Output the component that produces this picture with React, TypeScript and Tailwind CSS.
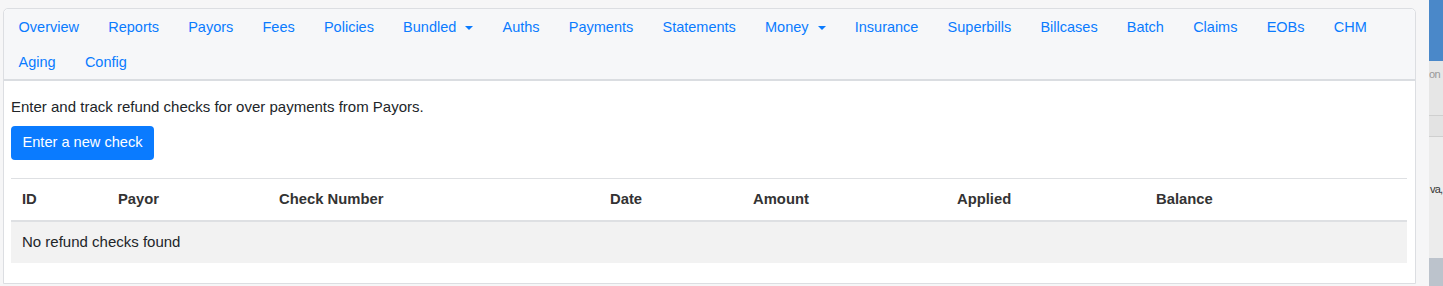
const navRow1 = [
  { label: "Overview" },
  { label: "Reports" },
  { label: "Payors" },
  { label: "Fees" },
  { label: "Policies" },
  { label: "Bundled", dropdown: true },
  { label: "Auths" },
  { label: "Payments" },
  { label: "Statements" },
  { label: "Money", dropdown: true },
  { label: "Insurance" },
  { label: "Superbills" },
  { label: "Billcases" },
  { label: "Batch" },
  { label: "Claims" },
  { label: "EOBs" },
  { label: "CHM" },
];

const navRow2 = [{ label: "Aging" }, { label: "Config" }];

const columns = [
  { label: "ID", w: "w-[96px]" },
  { label: "Payor", w: "w-[161px]" },
  { label: "Check Number", w: "w-[331px]" },
  { label: "Date", w: "w-[143px]" },
  { label: "Amount", w: "w-[204px]" },
  { label: "Applied", w: "w-[199px]" },
  { label: "Balance", w: "flex-1" },
];

function NavItem({ label, dropdown }: { label: string; dropdown?: boolean }) {
  return (
    <a className="flex items-center h-[35px] pt-[3px] px-[14.6px] text-[14.5px] text-[#0a7bff] cursor-pointer">
      {label}
      {dropdown && (
        <span className="ml-[9px] w-0 h-0 border-l-[4px] border-r-[4px] border-t-[4px] border-l-transparent border-r-transparent border-t-[#0a7bff]" />
      )}
    </a>
  );
}

export default function App() {
  return (
    <div className="flex w-[1443px] h-[286px] overflow-hidden bg-[#f6f6f7] font-['Liberation_Sans',Arial,sans-serif]">
      <div className="w-[1429px] pl-[3px] pt-[8px]">
        <div className="w-[1413px] border border-[#dcdee2] rounded-t-[5px] bg-white">
          <div className="bg-[#f6f7f9] rounded-t-[5px] border-b-2 border-[#dadde1]">
            <div className="flex">
              {navRow1.map((n) => (
                <NavItem key={n.label} {...n} />
              ))}
            </div>
            <div className="flex">
              {navRow2.map((n) => (
                <NavItem key={n.label} {...n} />
              ))}
            </div>
          </div>
          <div className="pl-[7px] pr-[8px] pt-[15px] pb-[20px] text-[15px] text-[#212529]">
            <p className="leading-[22px]">Enter and track refund checks for over payments from Payors.</p>
            <button className="mt-[8px] h-[34px] px-[11.5px] rounded-[4px] bg-[#0a7bff] text-white text-[14.6px]">
              Enter a new check
            </button>
            <div className="mt-[18px] border-t border-[#dee0e3]">
              <div className="flex h-[43px] items-center border-b-2 border-[#dee0e3] font-bold text-[#333] text-[14.8px]">
                {columns.map((c) => (
                  <div key={c.label} className={`${c.w} pl-[11px]`}>
                    {c.label}
                  </div>
                ))}
              </div>
              <div className="flex h-[41px] items-center bg-[#f2f2f2] pl-[11px]">No refund checks found</div>
            </div>
          </div>
        </div>
      </div>
      <div className="w-[14px] flex flex-col bg-[#e6e6e6] text-[11px] overflow-hidden">
        <div className="h-[61px] bg-[#4a88c9]" />
        <div className="h-[54px] pt-[5px] text-[#999] tracking-[-0.5px] whitespace-nowrap">on</div>
        <div className="h-[22px] border-t border-b border-[#cfcfcf] bg-[#e3e3e3]" />
        <div className="h-[121px] pt-[44px] pl-[1px] text-[#333] tracking-[-0.8px] whitespace-nowrap bg-[#ececec]">va,</div>
        <div className="flex-1 bg-[#bcc3cc]" />
      </div>
    </div>
  );
}
